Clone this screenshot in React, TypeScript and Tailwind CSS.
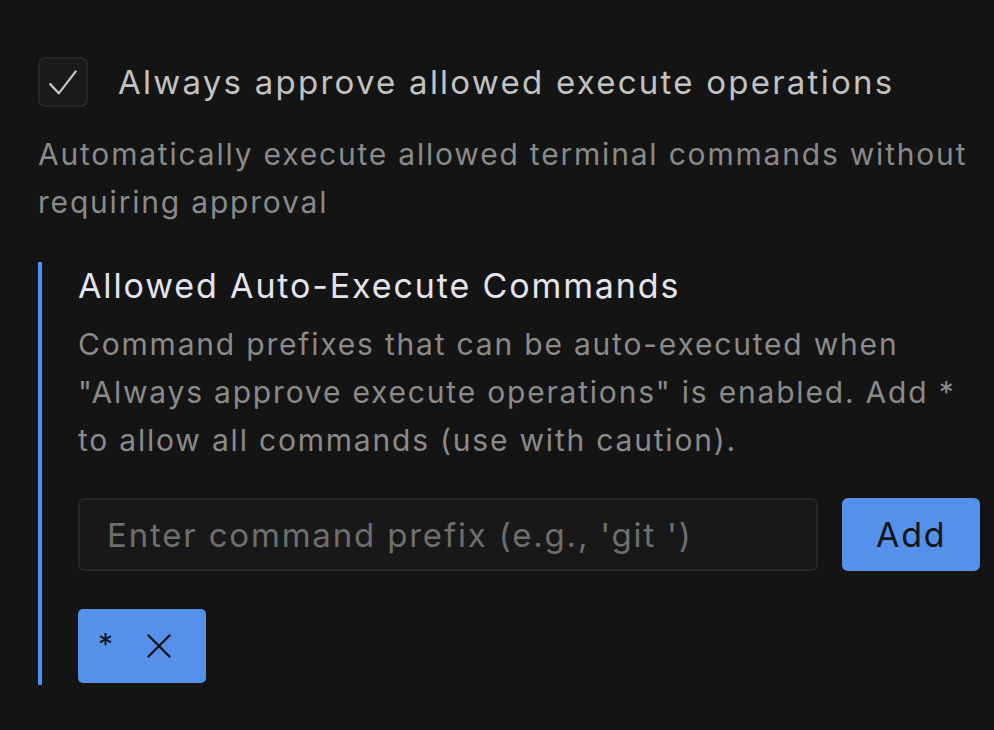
const App = () => {
  return (
    <div
      className="w-[994px] h-[730px] bg-[#141414] overflow-hidden pl-[38px] pr-[14px] pt-[56px]"
      style={{ fontFamily: 'Inter, "Noto Sans", sans-serif' }}
    >
      <label className="flex items-center gap-[30px]">
        <span className="flex items-center justify-center w-[50px] h-[50px] rounded-[7px] border-2 border-[#262626] bg-[#1a1a1a]">
          <svg width="34" height="34" viewBox="0 0 24 24" fill="none" stroke="#c4c4c4" strokeWidth="1.6" strokeLinecap="round" strokeLinejoin="round">
            <path d="M3 13.5l6 6.5L21 4.5" />
          </svg>
        </span>
        <span className="text-[33px] leading-[50px] pt-[1px] tracking-[0.068em] text-[#c2c2c2]">
          Always approve allowed execute operations
        </span>
      </label>

      <p className="mt-[23px] text-[30px] leading-[48px] tracking-[0.06em] text-[#8a8a8a]">
        Automatically execute allowed terminal commands without requiring approval
      </p>

      <div className="mt-[36px] border-l-4 border-[#4f8ff0] pl-[36px] pb-[2px]">
        <h3 className="text-[34px] leading-[48px] tracking-[0.055em] text-[#e4e4ee]">Allowed Auto-Execute Commands</h3>
        <p className="mt-[10px] text-[30px] leading-[48px] tracking-[0.06em] text-[#8a8a8a]">
          Command prefixes that can be auto-executed when "Always approve execute operations" is enabled. Add * to allow all commands (use with caution).
        </p>

        <div className="mt-[34px] flex items-center gap-[24px]">
          <input
            className="w-[741px] h-[73px] rounded-[6px] border-2 border-[#262626] bg-[#181818] px-[27px] text-[33px] tracking-[0.055em] text-[#c2c2c2] placeholder:text-[#6e6e6e] outline-none"
            placeholder="Enter command prefix (e.g., 'git ')"
          />
          <button className="w-[138px] h-[73px] rounded-[6px] bg-[#5591ea] text-[34px] tracking-[0.05em] text-[#141414]">
            Add
          </button>
        </div>

        <div className="mt-[38px] flex">
          <span className="flex items-center gap-[34px] h-[74px] w-[128px] rounded-[5px] bg-[#5591ea] pl-[20px] text-[30px] text-[#141414]">
            <span className="-mt-[4px]">*</span>
            <svg width="24" height="24" viewBox="0 0 24 24" fill="none" stroke="#141414" strokeWidth="2.4" strokeLinecap="round">
              <path d="M1.5 1.5l21 21M22.5 1.5l-21 21" />
            </svg>
          </span>
        </div>
      </div>
    </div>
  );
};

export default App;
